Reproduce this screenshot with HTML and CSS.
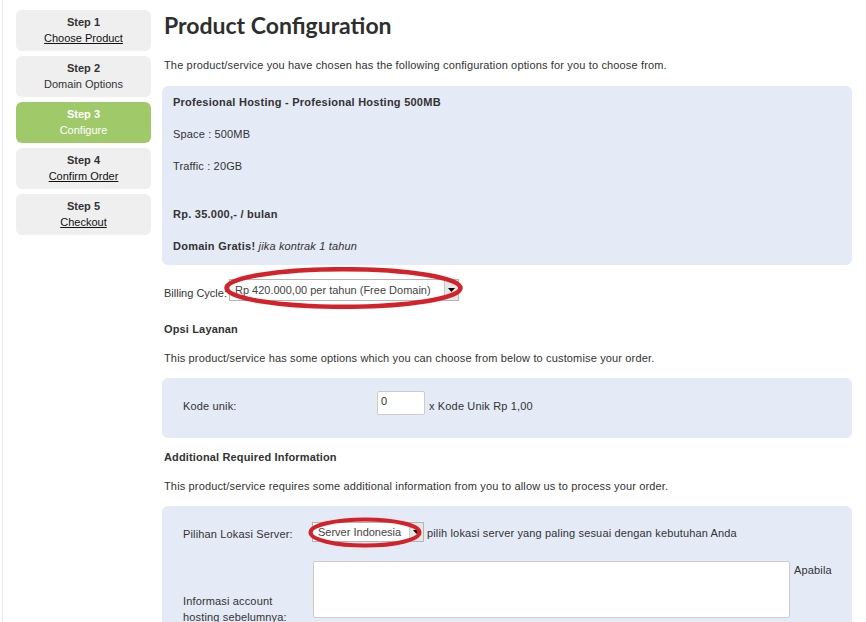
FILE: index.html
```html
<!DOCTYPE html>
<html lang="id">
<head>
    <meta charset="UTF-8">
    <meta name="viewport" content="width=device-width, initial-scale=1.0">
    <title>Product Configuration</title>
    <link rel="stylesheet" href="styles.css">
</head>
<body>
    <div class="page">
        <div class="steps">
            <div class="step"><b>Step 1</b><a href="#">Choose Product</a></div>
            <div class="step"><b>Step 2</b><span>Domain Options</span></div>
            <div class="step active"><b>Step 3</b><span>Configure</span></div>
            <div class="step"><b>Step 4</b><a href="#">Confirm Order</a></div>
            <div class="step"><b>Step 5</b><a href="#">Checkout</a></div>
        </div>

        <div class="main">
            <h1>Product Configuration</h1>
            <p class="intro">The product/service you have chosen has the following configuration options for you to choose from.</p>

            <div class="box product">
                <p><b>Profesional Hosting - Profesional Hosting 500MB</b></p>
                <p>Space : 500MB</p>
                <p class="gap">Traffic : 20GB</p>
                <p><b>Rp. 35.000,- / bulan</b></p>
                <p><b>Domain Gratis!</b> <i>jika kontrak 1 tahun</i></p>
            </div>

            <div class="billing">
                <span class="billing-label">Billing Cycle:</span>
                <div class="marked">
                    <div class="select select-billing">
                        <span class="select-text">Rp 420.000,00 per tahun (Free Domain)</span>
                        <span class="select-btn"><svg width="7" height="4" viewBox="0 0 7 4"><path d="M0 0h7L3.5 4z" fill="#000"/></svg></span>
                    </div>
                    <svg class="ring ring-billing" viewBox="0 0 239 42"><ellipse cx="119.5" cy="21" rx="117" ry="18.8" fill="none" stroke="#d3222a" stroke-width="4.5"/></svg>
                </div>
            </div>

            <h3>Opsi Layanan</h3>
            <p class="intro">This product/service has some options which you can choose from below to customise your order.</p>

            <div class="box options">
                <div class="row row-kode">
                    <span class="label label-kode">Kode unik:</span>
                    <span class="input">0</span>
                    <span class="after">x Kode Unik Rp 1,00</span>
                </div>
            </div>

            <h3 class="after-box">Additional Required Information</h3>
            <p class="intro">This product/service requires some additional information from you to allow us to process your order.</p>

            <div class="box extra">
                <div class="row row-server">
                    <span class="label label-wide">Pilihan Lokasi Server:</span>
                    <div class="marked">
                        <div class="select select-server">
                            <span class="select-text">Server Indonesia</span>
                            <span class="select-btn"><svg width="7" height="4" viewBox="0 0 7 4"><path d="M0 0h7L3.5 4z" fill="#000"/></svg></span>
                        </div>
                        <svg class="ring ring-server" viewBox="0 0 114 31"><ellipse cx="57" cy="15.5" rx="54.5" ry="13" fill="none" stroke="#d3222a" stroke-width="4"/></svg>
                    </div>
                    <span class="after">pilih lokasi server yang paling sesuai dengan kebutuhan Anda</span>
                </div>
                <div class="row row-info">
                    <span class="label label-wide label-info">Informasi account hosting sebelumnya:</span>
                    <div class="textarea"></div>
                    <span class="after after-info">Apabila</span>
                </div>
            </div>
        </div>
    </div>
</body>
</html>
```

FILE: styles.css
```css
body {
    margin: 0;
    padding-left: 2px;
    background-color: #fff;
    color: #333;
    font-family: "Liberation Sans", Arial, sans-serif;
    font-size: 11px;
    overflow: hidden;
}

.page {
    display: flex;
    gap: 11px;
    min-height: 622px;
    padding: 10px 14px 0 13px;
    border-left: 1px solid #ececec;
}

/* steps on the left */
.steps {
    flex: none;
    display: flex;
    flex-direction: column;
    gap: 5px;
    width: 135px;
}

.step {
    display: flex;
    flex-direction: column;
    align-items: center;
    justify-content: center;
    height: 41px;
    padding-bottom: 1px;
    box-sizing: border-box;
    border-radius: 6px;
    background-color: #efefef;
    color: #333;
    line-height: 16px;
}

.step a {
    color: #111;
    text-decoration: underline;
}

.step.active {
    background-color: #a0c96a;
    color: #fff;
}

/* main column */
.main {
    flex: 1;
    min-width: 0;
    letter-spacing: 0.15px;
}

h1 {
    margin: 0 0 0 2px;
    font-family: Lato, "Open Sans", sans-serif;
    font-size: 23px;
    font-weight: 700;
    line-height: 30px;
    letter-spacing: 0;
    color: #2e2e2e;
}

h3 {
    margin: 20px 0 0 2px;
    font-size: 11px;
    line-height: 16px;
    color: #333;
}

h3.after-box {
    margin-top: 11px;
}

p {
    margin: 0;
    line-height: 16px;
}

.intro {
    margin: 13px 0 0 2px;
}

h1 + .intro {
    margin-top: 17px;
}

.box {
    margin-top: 12px;
    border-radius: 6px;
    background-color: #e4eaf6;
}

.product {
    margin-top: 13px;
    padding: 8px 11px 11px;
}

.product p {
    margin-bottom: 16px;
}

.product b {
    letter-spacing: 0.25px;
}

.product p:last-child {
    margin-bottom: 0;
}

.product .gap {
    margin-bottom: 32px;
}

/* fake selects */
.billing {
    display: flex;
    align-items: flex-end;
    gap: 2px;
    margin: 14px 0 0 2px;
}

.billing-label {
    line-height: 14px;
    padding-bottom: 1px;
    letter-spacing: 0;
}

.marked {
    position: relative;
    flex: none;
}

.select {
    display: flex;
    align-items: center;
    border: 1px solid #b5b5b5;
    background-color: #fff;
    font-size: 11px;
    letter-spacing: 0;
    color: #444;
}

.select-text {
    flex: 1;
    padding-left: 5px;
    white-space: nowrap;
}

.select-btn {
    display: flex;
    align-items: center;
    justify-content: center;
    width: 13px;
    align-self: stretch;
    border-left: 1px solid #c9c9c9;
    background-color: #e6e6e6;
}

.select-billing {
    width: 228px;
    height: 20px;
}

.select-server {
    width: 110px;
    height: 18px;
}

.ring {
    position: absolute;
    pointer-events: none;
}

.ring-billing {
    left: -5px;
    top: -12px;
    width: 239px;
    height: 42px;
}

.ring-server {
    left: -4px;
    top: -5px;
    width: 114px;
    height: 31px;
}

/* option rows */
.options {
    padding: 13px 21px 23px;
}

.extra {
    padding: 15px 21px 20px;
}

.row {
    display: flex;
    align-items: flex-end;
}

.label {
    flex: none;
    line-height: 16px;
}

.label-kode {
    width: 194px;
    padding-bottom: 1px;
}

.input {
    box-sizing: border-box;
    width: 48px;
    height: 24px;
    padding: 2px 0 0 3px;
    border: 1px solid #ccc;
    border-radius: 2px;
    background-color: #fff;
    font-size: 11px;
    line-height: 14px;
}

.after {
    margin-left: 4px;
    padding-bottom: 1px;
    line-height: 16px;
}

.row-server {
    align-items: center;
}

.row-server .label {
    padding-top: 4px;
}

.row-server .after {
    margin-left: 3px;
    padding-top: 4px;
}

.label-wide {
    width: 129px;
}

.row-info {
    align-items: flex-start;
    margin-top: 19px;
}

.label-info {
    width: 118px;
    margin-right: 12px;
    padding-top: 32px;
}

.textarea {
    flex: none;
    width: 477px;
    height: 57px;
    box-sizing: border-box;
    border: 1px solid #ccc;
    border-radius: 2px;
    background-color: #fff;
}

.after-info {
    padding-top: 1px;
}
```
